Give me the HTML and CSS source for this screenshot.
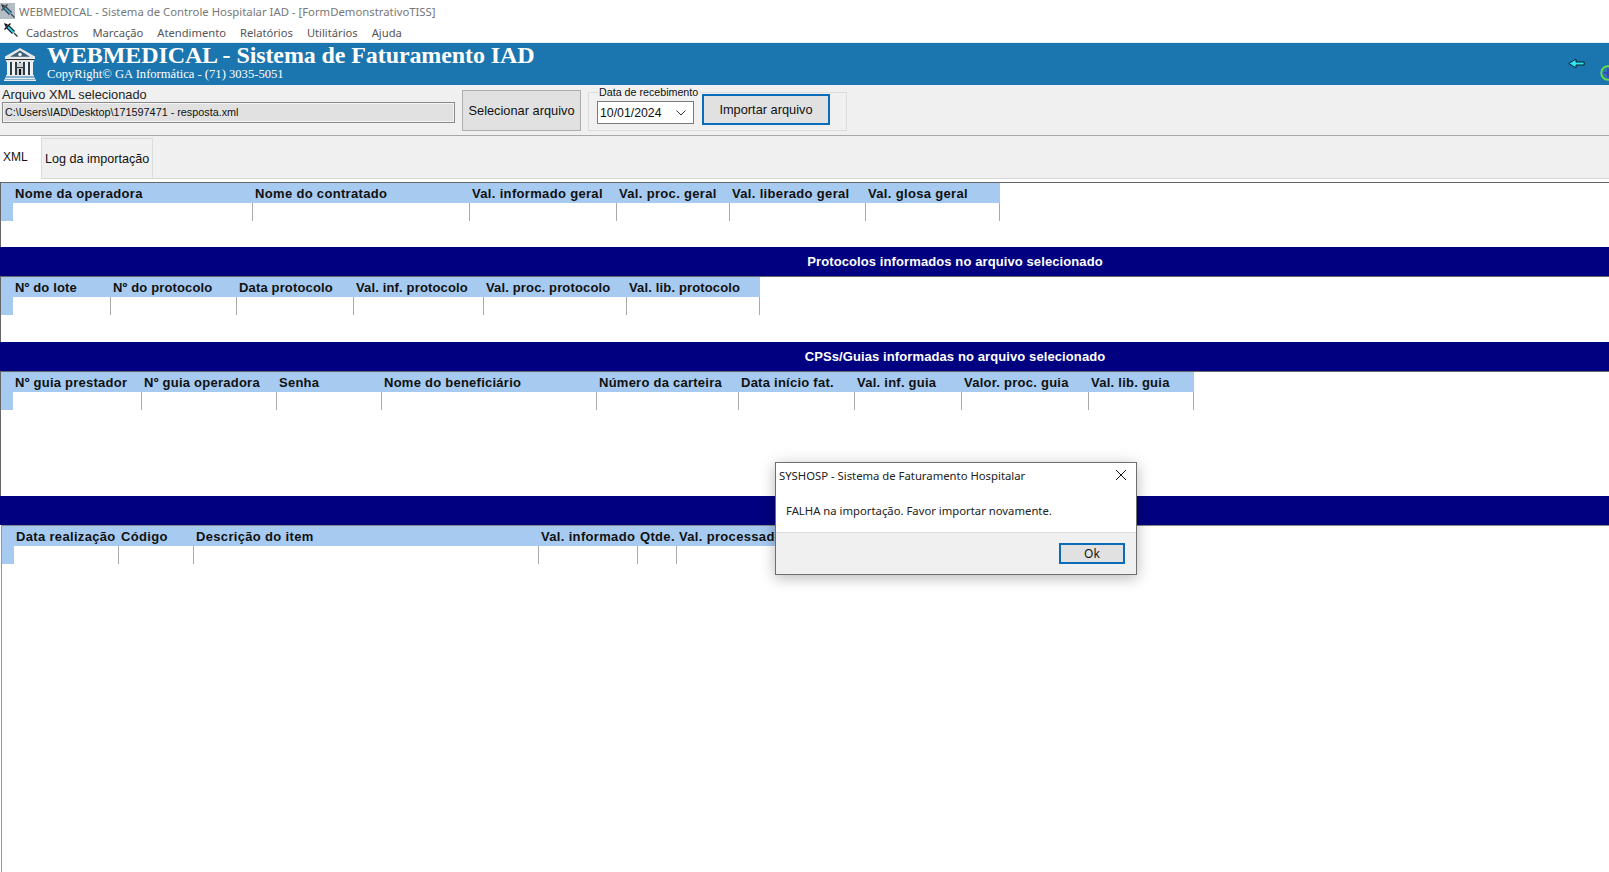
FILE: index.html
```html
<!DOCTYPE html>
<html lang="pt-BR">
<head>
<meta charset="utf-8">
<title>WEBMEDICAL - FormDemonstrativoTISS</title>
<link rel="stylesheet" href="styles.css">
</head>
<body>
<div class="app">
  <div class="titlebar">
    <span class="title-icon">
      <svg viewBox="0 0 15 15" width="15" height="15"><path d="M1 1l4 1.500L2.500 5z" fill="#333"/><path d="M4 4l6.500 6.500" stroke="#24404f" stroke-width="4.200"/><path d="M4.500 4.500l6 6" stroke="#5aa0c0" stroke-width="2"/><path d="M11 11l3.500 3.500" stroke="#445" stroke-width="1.200"/><path d="M1.500 7.500l6-6" stroke="#444" stroke-width="1.200"/></svg>
    </span>
    <span class="title-text">WEBMEDICAL - Sistema de Controle Hospitalar IAD - [FormDemonstrativoTISS]</span>
  </div>
  <nav class="menubar">
    <span class="menu-icon">
      <svg viewBox="0 0 15 15" width="15" height="15"><path d="M1 1l4 1.500L2.500 5z" fill="#111"/><path d="M4 4l6.500 6.500" stroke="#101820" stroke-width="4.200"/><path d="M4.500 4.500l6 6" stroke="#27cfe4" stroke-width="2"/><path d="M11 11l3.500 3.500" stroke="#333" stroke-width="1.200"/><path d="M1.500 7.500l6-6" stroke="#111" stroke-width="1.200"/></svg>
    </span>
    <span class="menu-item">Cadastros</span>
    <span class="menu-item">Marcação</span>
    <span class="menu-item">Atendimento</span>
    <span class="menu-item">Relatórios</span>
    <span class="menu-item">Utilitários</span>
    <span class="menu-item">Ajuda</span>
  </nav>
  <header class="banner">
    <svg class="logo" viewBox="0 0 32 34" width="32" height="34">
      <path d="M16 1L1 9.500V12h30V9.500z" fill="#e8e8e8"/>
      <path d="M16 3.500L6 9.800h20z" fill="#3b5f78"/>
      <circle cx="16" cy="7.500" r="1.800" fill="#f4f4f4"/>
      <rect x="2" y="12" width="28" height="1" fill="#333"/>
      <rect x="2" y="13" width="28" height="2" fill="#e4e4e4"/>
      <rect x="3" y="15" width="26" height="13" fill="#2c3c48"/>
      <path d="M3 15h3v13H3zM8 15h3v13H8zM13 15h2v5h-2zM17 15h2v5h-2zM21 15h3v13h-3zM26 15h3v13h-3z" fill="#f2f2f2"/>
      <rect x="13" y="16" width="6" height="4" fill="#d0d0d0"/>
      <rect x="13" y="21" width="6" height="7" fill="#c8c8c8"/>
      <rect x="15" y="22" width="2" height="6" fill="#111"/>
      <path d="M2 28h28v1.500H2zM1 30.500h30V32H1zM0 32.500h32V34H0z" fill="#ececec"/>
    </svg>
    <div class="brand">
      <div class="brand-name">WEBMEDICAL - Sistema de Faturamento IAD</div>
      <div class="brand-copy">CopyRight© GA Informática - (71) 3035-5051</div>
    </div>
    <svg class="arrow" viewBox="0 0 17 11" width="17" height="11"><path d="M.8 5.500L8 1v3h8.200v3H8v3z" fill="#2fe6ee" stroke="#06222c" stroke-width="1"/></svg>
    <svg class="plus" viewBox="0 0 16 16" width="16" height="16"><circle cx="8" cy="8" r="6.800" fill="#2a7ca8" stroke="#6fdc4c" stroke-width="1.800"/><path d="M8 3.500v9M3.500 8h9" stroke="#3a48c0" stroke-width="2"/></svg>
  </header>
  <section class="toolbar">
    <div class="file-box">
      <label class="file-label">Arquivo XML selecionado</label>
      <div class="file-input">C:\Users\IAD\Desktop\171597471 - resposta.xml</div>
    </div>
    <button class="btn btn-select">Selecionar arquivo</button>
    <div class="group">
      <span class="group-legend">Data de recebimento</span>
      <div class="date-input">
        <span>10/01/2024</span>
        <svg viewBox="0 0 10 6" width="10" height="6"><path d="M.5.500L5 5 9.500.500" fill="none" stroke="#333" stroke-width="1"/></svg>
      </div>
      <button class="btn btn-import">Importar arquivo</button>
    </div>
  </section>
  <div class="tabs">
    <div class="tab tab-active">XML</div>
    <div class="tab tab-log">Log da importação</div>
  </div>
  <main class="panel">
    <div class="grid-wrap grid-wrap-1">
      <div class="grid grid-1">
        <div class="hd sel"></div>
        <div class="hd">Nome da operadora</div><div class="hd">Nome do contratado</div><div class="hd">Val. informado geral</div><div class="hd">Val. proc. geral</div><div class="hd">Val. liberado geral</div><div class="hd">Val. glosa geral</div>
        <div class="sel"></div>
        <div class="cell"></div><div class="cell"></div><div class="cell"></div><div class="cell"></div><div class="cell"></div><div class="cell"></div>
      </div>
    </div>
    <div class="navy">Protocolos informados no arquivo selecionado</div>
    <div class="grid-wrap grid-wrap-2">
      <div class="grid grid-2">
        <div class="hd sel"></div>
        <div class="hd">Nº do lote</div><div class="hd">Nº do protocolo</div><div class="hd">Data protocolo</div><div class="hd">Val. inf. protocolo</div><div class="hd">Val. proc. protocolo</div><div class="hd">Val. lib. protocolo</div>
        <div class="sel"></div>
        <div class="cell"></div><div class="cell"></div><div class="cell"></div><div class="cell"></div><div class="cell"></div><div class="cell"></div>
      </div>
    </div>
    <div class="navy">CPSs/Guias informadas no arquivo selecionado</div>
    <div class="grid-wrap grid-wrap-3">
      <div class="grid grid-3">
        <div class="hd sel"></div>
        <div class="hd">Nº guia prestador</div><div class="hd">Nº guia operadora</div><div class="hd">Senha</div><div class="hd">Nome do beneficiário</div><div class="hd">Número da carteira</div><div class="hd">Data início fat.</div><div class="hd">Val. inf. guia</div><div class="hd">Valor. proc. guia</div><div class="hd">Val. lib. guia</div>
        <div class="sel"></div>
        <div class="cell"></div><div class="cell"></div><div class="cell"></div><div class="cell"></div><div class="cell"></div><div class="cell"></div><div class="cell"></div><div class="cell"></div><div class="cell"></div>
      </div>
    </div>
    <div class="navy"></div>
    <div class="grid-wrap grid-wrap-4">
      <div class="grid grid-4">
        <div class="hd sel"></div>
        <div class="hd">Data realização</div><div class="hd">Código</div><div class="hd">Descrição do item</div><div class="hd">Val. informado</div><div class="hd">Qtde.</div><div class="hd">Val. processado</div>
        <div class="sel"></div>
        <div class="cell"></div><div class="cell"></div><div class="cell"></div><div class="cell"></div><div class="cell"></div><div class="cell"></div>
      </div>
    </div>
  </main>
  <div class="dialog">
    <div class="dialog-body">
      <div class="dialog-title">
        <span>SYSHOSP - Sistema de Faturamento Hospitalar</span>
        <svg viewBox="0 0 12 12" width="12" height="12"><path d="M1 1l10 10M11 1L1 11" stroke="#111" stroke-width="1"/></svg>
      </div>
      <p class="dialog-msg">FALHA na importação. Favor importar novamente.</p>
    </div>
    <div class="dialog-foot"><button class="btn btn-ok">Ok</button></div>
  </div>
</div>
</body>
</html>
```
FILE: styles.css
```css
* { box-sizing: border-box; }
html, body { margin: 0; padding: 0; height: 100%; background: #fff; }
.app { position: relative; width: 1609px; height: 872px; overflow: hidden; display: flex; flex-direction: column; font-family: "Liberation Sans", Arial, sans-serif; }

.titlebar { height: 22px; flex: none; display: flex; align-items: center; font-family: "Noto Sans", sans-serif; font-size: 11.330px; color: #777; }
.title-icon { width: 15px; height: 16px; margin-right: 4px; background: #b4bcc4; display: flex; }
.menubar { height: 20px; flex: none; display: flex; align-items: center; font-family: "Noto Sans", sans-serif; font-size: 11.200px; color: #555; padding-left: 3px; }
.menu-icon { width: 15px; height: 15px; margin-right: 8px; margin-top: -6px; display: flex; }
.menu-item { margin-right: 14px; }

.banner { height: 43px; flex: none; background: #1b75ae; display: flex; align-items: center; color: #fff; padding-left: 4px; border-top: 1px solid #e6eef4; }
.logo { flex: none; }
.brand { margin-left: 11px; margin-bottom: 5px; font-family: "Liberation Serif", serif; }
.brand-name { font-size: 24px; font-weight: bold; line-height: 25px; letter-spacing: -0.100px; }
.brand-copy { font-size: 12.600px; line-height: 13px; }
.arrow { margin-left: auto; margin-right: 15px; margin-top: -2px; flex: none; }
.plus { margin-right: -7px; margin-top: 18px; flex: none; }

.toolbar { height: 51px; flex: none; background: #f0f0f0; border-bottom: 1px solid #a8a8a8; display: flex; align-items: flex-start; padding: 5px 0 0 2px; }
.file-box { width: 453px; margin-right: 7px; }
.file-label { display: block; font-size: 12.800px; line-height: 14px; color: #222; margin-top: -2px; margin-bottom: -1px; height: 15px; }
.file-input { height: 21px; background: #e1e1e1; border: 1px solid #8a8a8a; box-shadow: inset 0 0 0 1px #f4f4f4; font-size: 10.800px; line-height: 19px; padding-left: 2px; color: #111; }
.btn { font-family: "Liberation Sans", Arial, sans-serif; font-size: 12.800px; color: #111; background: #e1e1e1; border: 1px solid #adadad; padding: 0; }
.btn-select { width: 119px; height: 41px; margin-right: 7px; }
.group { position: relative; width: 259px; height: 39px; margin-top: 2px; border: 1px solid #dcdcdc; display: flex; align-items: flex-start; padding: 1px 0 0 8px; }
.group-legend { position: absolute; left: 9px; top: -8px; background: #f0f0f0; padding: 0 1px; font-size: 10.700px; line-height: 14px; color: #111; }
.date-input { width: 97px; height: 23px; margin-top: 7px; margin-right: 8px; background: #fff; border: 1px solid #7a7a7a; display: flex; align-items: center; justify-content: space-between; padding: 0 7px 0 2px; font-size: 12.300px; color: #111; }
.btn-import { width: 128px; height: 31px; border: 2px solid #0a6cb8; }

.tabs { height: 43px; flex: none; background: #f0f0f0; border-bottom: 1px solid #d8d8d8; display: flex; padding-top: 2px; }
.tab { font-size: 12px; color: #111; }
.tab-active { width: 41px; margin-top: -2px; height: 43px; background: #fff; padding: 14px 0 0 3px; }
.tab-log { width: 112px; border: 1px solid #dcdcdc; border-bottom: 0; padding: 13px 0 0 3px; font-size: 12.600px; }

.panel { flex: 1; min-height: 0; display: flex; flex-direction: column; padding-top: 3px; background: #fff; }
.grid-wrap { flex: none; border-top: 1px solid #666; border-left: 1px solid #666; background: #fff; }
.grid-wrap-1 { height: 65px; }
.grid-wrap-2 { height: 66px; }
.grid-wrap-3 { height: 125px; }
.grid-wrap-4 { flex: 1; margin-left: 1px; border-top: 1px solid #888; border-left: 1px solid #999; }

.navy { height: 29px; flex: none; background: #000080; color: #fff; font-size: 13px; font-weight: bold; line-height: 30px; text-align: center; padding-left: 301px; letter-spacing: 0.100px; }

.grid { display: grid; grid-template-rows: 20px 18px; width: max-content; }
.grid-1 { grid-template-columns: 12px 240px 217px 147px 113px 136px 134px; letter-spacing: 0.330px; }
.grid-2 { grid-template-columns: 12px 98px 126px 117px 130px 143px 133px; letter-spacing: 0.150px; }
.grid-3 { grid-template-columns: 12px 129px 135px 105px 215px 142px 116px 107px 127px 105px; letter-spacing: 0.250px; }
.grid-4 { grid-template-columns: 12px 105px 75px 345px 99px 39px 420px; letter-spacing: 0.330px; }
.hd { background: #a6caf0; font-size: 13px; font-weight: bold; color: #111; line-height: 21px; padding-left: 2px; white-space: nowrap; overflow: hidden; }
.sel { background: #a6caf0; }
.hd.sel { padding: 0; }
.cell { border-right: 1px solid #aaa; background: #fff; }

.dialog { position: absolute; left: 775px; top: 462px; width: 362px; height: 113px; background: #f0f0f0; border: 1px solid #6e6e6e; box-shadow: 0 3px 14px rgba(0,0,0,.28); display: flex; flex-direction: column; font-family: "Noto Sans", sans-serif; font-size: 11.300px; color: #222; }
.dialog-body { height: 70px; background: #fff; border-bottom: 1px solid #dfdfdf; }
.dialog-title { display: flex; justify-content: space-between; align-items: center; padding: 0 9px 0 3px; height: 24px; }
.dialog-msg { margin: 15px 0 0 10px; line-height: 18px; }
.dialog-foot { flex: 1; display: flex; justify-content: flex-end; padding: 10px 11px 0 0; }
.btn-ok { width: 66px; height: 21px; border: 2px solid #0a6cb8; font-family: "Noto Sans", sans-serif; font-size: 12px; }
```
